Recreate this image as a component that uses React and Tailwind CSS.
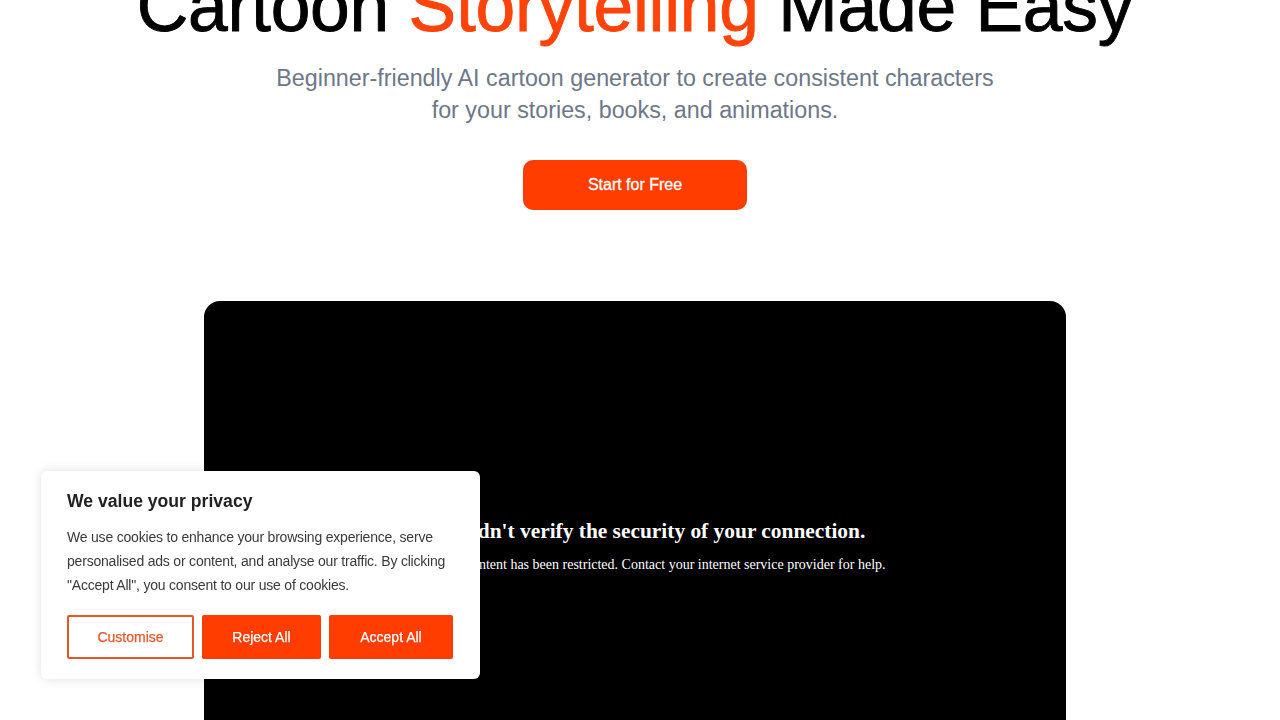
export default function App() {
  return (
    <div className="relative min-h-[720px] w-full overflow-hidden bg-white" style={{ fontFamily: '"Liberation Sans", Arial, sans-serif' }}>
      <div className="flex flex-col items-center pr-[10px]">
        <h1 className="mt-[-29px] whitespace-nowrap text-[71.4px] leading-none font-normal tracking-[-0.25px] text-black [-webkit-text-stroke:0.9px_currentcolor]">
          Cartoon <span className="text-[#ff4309]">Storytelling</span> Made Easy
        </h1>
        <p className="mt-[20px] text-center text-[23.3px] leading-[32px] text-[#6d7788]">
          Beginner-friendly AI cartoon generator to create consistent characters
          <br />
          for your stories, books, and animations.
        </p>
        <button className="mt-[34px] flex h-[50px] w-[224px] items-center justify-center rounded-[10px] bg-[#ff3d00] text-[16px] font-medium text-white [-webkit-text-stroke:0.3px_currentcolor]">
          Start for Free
        </button>
        <div className="mt-[91px] flex h-[480px] w-[862px] flex-col items-center rounded-t-[16px] bg-black pt-[216px] text-white" style={{ fontFamily: '"Liberation Serif", "Times New Roman", serif' }}>
          <div className="text-[21.4px] font-bold leading-[28px]">We couldn't verify the security of your connection.</div>
          <div className="mt-[10px] text-[14px] leading-[20px]">Access to this content has been restricted. Contact your internet service provider for help.</div>
        </div>
      </div>

      <div className="fixed bottom-[41px] left-[41px] w-[439px] rounded-[6px] bg-white px-[26px] pt-[19px] pb-[20px] shadow-[0_0_12px_rgba(0,0,0,0.12)]">
        <div className="text-[17.6px] font-bold leading-[22px] text-[#212121]">We value your privacy</div>
        <p className="mt-[13px] text-[14px] leading-[24px] tracking-[-0.2px] text-[#3a3a3a]">
          We use cookies to enhance your browsing experience, serve personalised ads or content, and analyse our traffic. By clicking "Accept All", you consent to our use of cookies.
        </p>
        <div className="mt-[18px] flex gap-[8px]">
          <button className="flex h-[44px] w-[127px] items-center justify-center rounded-[2px] border-2 border-[#e2582b] bg-white text-[14px] font-medium text-[#e2582b] [-webkit-text-stroke:0.25px_currentcolor]">Customise</button>
          <button className="flex h-[44px] w-[119px] items-center justify-center rounded-[2px] bg-[#ff3d00] text-[14px] font-medium text-white [-webkit-text-stroke:0.25px_currentcolor]">Reject All</button>
          <button className="flex h-[44px] w-[124px] items-center justify-center rounded-[2px] bg-[#ff3d00] text-[14px] font-medium text-white [-webkit-text-stroke:0.25px_currentcolor]">Accept All</button>
        </div>
      </div>
    </div>
  );
}
